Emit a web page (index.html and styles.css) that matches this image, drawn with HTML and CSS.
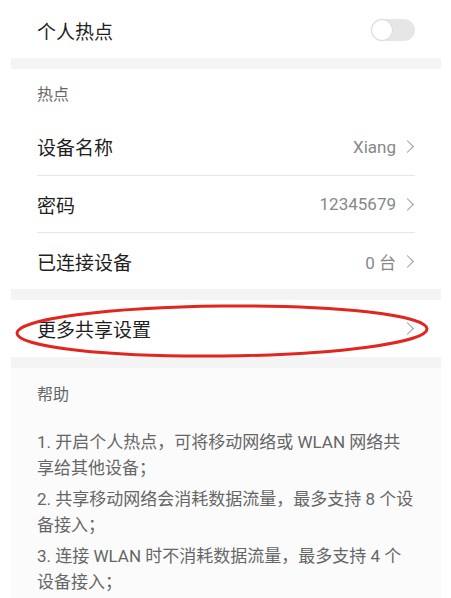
FILE: index.html
```html
<!DOCTYPE html>
<html lang="zh-CN">
  <head>
    <meta charset="UTF-8" />
    <meta name="viewport" content="width=device-width, initial-scale=1.0" />
    <title>个人热点</title>
    <link rel="stylesheet" href="styles.css">
  </head>
  <body>
    <div class="page">
      <div class="row row-top">
        <span class="row-title">个人热点</span>
        <span class="switch"><span class="knob"></span></span>
      </div>
      <div class="gap"></div>

      <div class="section-label">热点</div>
      <div class="list">
        <div class="row">
          <span class="row-title">设备名称</span>
          <span class="row-value">Xiang <span class="chevron"></span></span>
        </div>
        <div class="row">
          <span class="row-title">密码</span>
          <span class="row-value">12345679 <span class="chevron"></span></span>
        </div>
        <div class="row">
          <span class="row-title">已连接设备</span>
          <span class="row-value">0 台 <span class="chevron"></span></span>
        </div>
      </div>
      <div class="gap"></div>

      <div class="more">
        <div class="row">
          <span class="row-title">更多共享设置</span>
          <span class="row-value"><span class="chevron"></span></span>
        </div>
        <!-- hand-drawn marker round the row -->
        <svg class="circle-mark" width="451" height="60" viewBox="0 0 451 60">
          <ellipse cx="222" cy="30" rx="205" ry="25" fill="none" stroke="#e0261f" stroke-width="3" transform="rotate(-0.6 222 30)" />
        </svg>
      </div>
      <div class="gap"></div>

      <div class="help">
        <div class="section-label">帮助</div>
        <p>1. 开启个人热点，可将移动网络或 WLAN 网络共享给其他设备；</p>
        <p>2. 共享移动网络会消耗数据流量，最多支持 8 个设备接入；</p>
        <p>3. 连接 WLAN 时不消耗数据流量，最多支持 4 个设备接入；</p>
      </div>
    </div>
  </body>
</html>
```

FILE: styles.css
```css
* {
  margin: 0;
  padding: 0;
  box-sizing: border-box;
}

body {
  font-family: Roboto, "Noto Sans CJK SC", sans-serif;
  background-color: #fff;
  color: #1f1f1f;
  width: 451px;
  height: 598px;
  overflow: hidden;
}

.page {
  display: flex;
  flex-direction: column;
}

.row {
  display: flex;
  justify-content: space-between;
  align-items: center;
  height: 57px;
  margin: 0 36px 0 37px;
}

.row-top {
  height: 58px;
  padding-top: 2px;
}

.row-title {
  font-size: 19px;
}

.list .row + .row {
  border-top: 1px solid #e6e6e6;
}

.row-value {
  display: flex;
  align-items: center;
  gap: 7px;
  font-size: 17px;
  color: #888;
}

.chevron {
  width: 9px;
  height: 9px;
  border-top: 1.5px solid #9a9a9a;
  border-right: 1.5px solid #9a9a9a;
  transform: rotate(45deg);
  margin-right: 3px;
}

.switch {
  position: relative;
  width: 44px;
  height: 22px;
  border-radius: 11px;
  background-color: #e6e6e6;
}

.knob {
  position: absolute;
  left: 1px;
  top: 1px;
  width: 20px;
  height: 20px;
  border-radius: 50%;
  background-color: #fff;
  box-shadow: 0 0 0 1px #dcdcdc;
}

.gap {
  height: 11px;
  margin: 0 10px 0 11px;
  background-color: #f4f4f4;
}

.section-label {
  font-size: 16px;
  line-height: 22px;
  color: #666;
  padding: 15px 37px 12px;
}

.more {
  position: relative;
}

.circle-mark {
  position: absolute;
  left: 0;
  top: 1px;
}

.help {
  margin: 0 10px 0 11px;
  background-color: #fbfbfb;
  padding-bottom: 20px;
}

.help .section-label {
  padding: 16px 26px 23px;
}

.help p {
  font-size: 17px;
  line-height: 26px;
  color: #666;
  padding: 0 27px 0 26px;
  margin-bottom: 5px;
}
```
